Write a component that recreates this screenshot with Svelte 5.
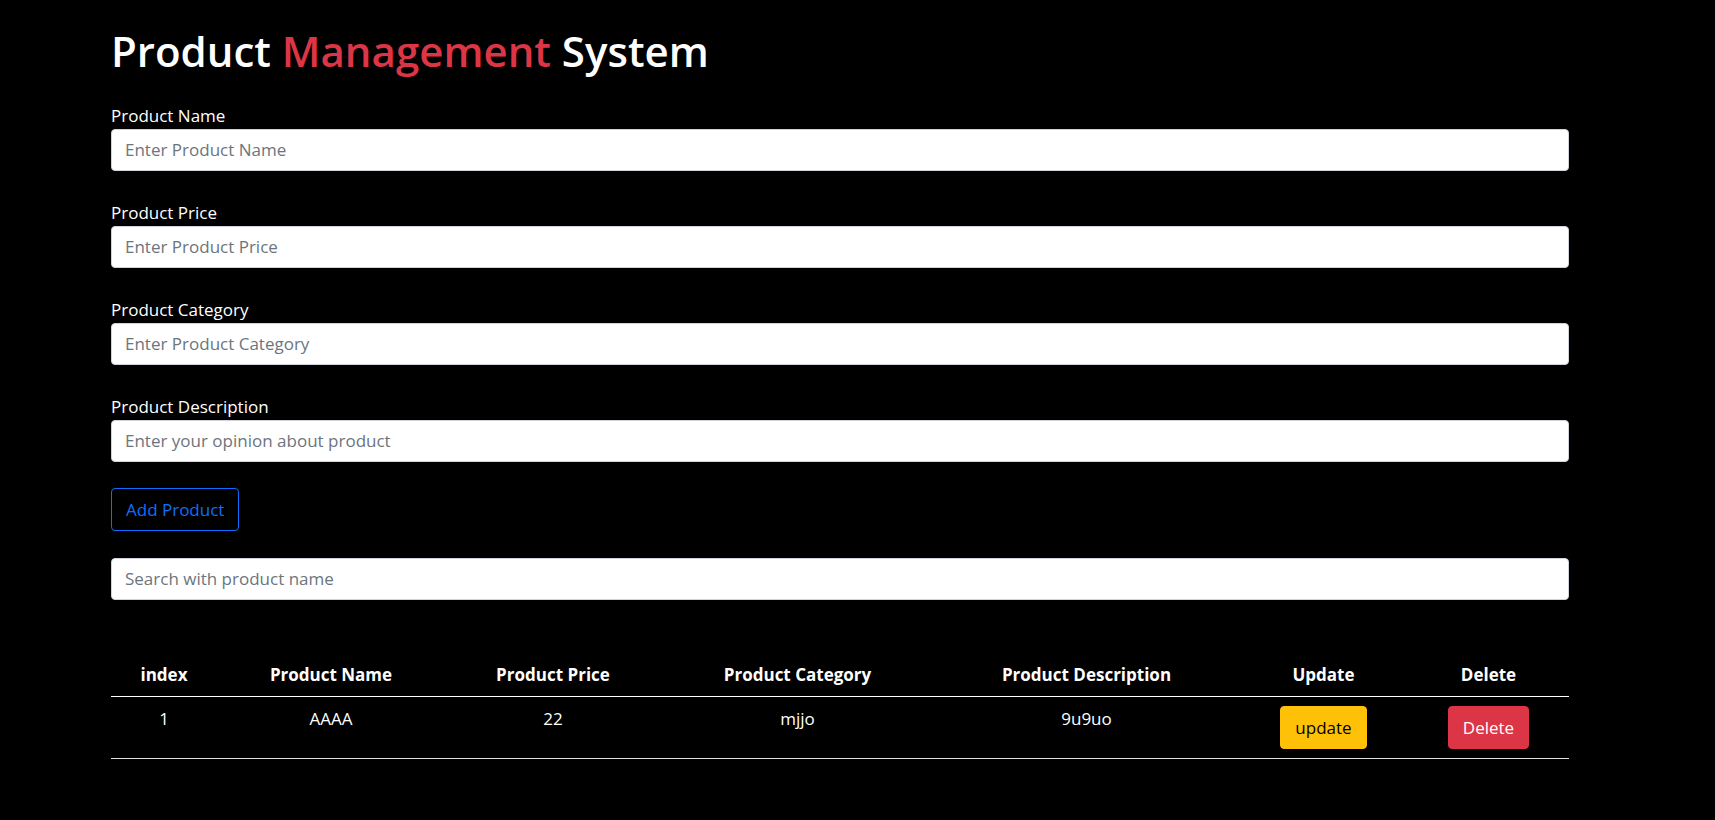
<script>
  const fields = [
    { id: 'name', label: 'Product Name', placeholder: 'Enter Product Name' },
    { id: 'price', label: 'Product Price', placeholder: 'Enter Product Price' },
    { id: 'category', label: 'Product Category', placeholder: 'Enter Product Category' },
    { id: 'description', label: 'Product Description', placeholder: 'Enter your opinion about product' },
  ];

  // Relative column widths, shared out over the table
  const columns = [
    { title: 'index', width: 106 },
    { title: 'Product Name', width: 228 },
    { title: 'Product Price', width: 216 },
    { title: 'Product Category', width: 273 },
    { title: 'Product Description', width: 305 },
    { title: 'Update', width: 169 },
    { title: 'Delete', width: 161 },
  ];
  const total = columns.reduce((sum, c) => sum + c.width, 0);

  let form = $state({ name: '', price: '', category: '', description: '' });
  let search = $state('');
  let products = $state([{ name: 'AAAA', price: '22', category: 'mjjo', description: '9u9uo' }]);
  let editing = $state(-1);

  const shown = $derived(
    products
      .map((product, index) => ({ product, index }))
      .filter(({ product }) => product.name.toLowerCase().includes(search.toLowerCase()))
  );

  function save(event) {
    event.preventDefault();
    if (editing >= 0) products[editing] = { ...form };
    else products.push({ ...form });
    editing = -1;
    form = { name: '', price: '', category: '', description: '' };
  }

  function edit(index) {
    form = { ...products[index] };
    editing = index;
  }

  function remove(index) {
    products.splice(index, 1);
    editing = -1;
  }
</script>

<main>
  <div class="container">
    <h1>Product <span>Management</span> System</h1>

    <form onsubmit={save}>
      {#each fields as field}
        <div class="field">
          <label for={field.id}>{field.label}</label>
          <input id={field.id} type="text" placeholder={field.placeholder} bind:value={form[field.id]} />
        </div>
      {/each}
      <button class="btn add" type="submit">Add Product</button>
    </form>

    <input
      class="search"
      type="text"
      aria-label="Search with product name"
      placeholder="Search with product name"
      bind:value={search}
    />

    <table>
      <colgroup>
        {#each columns as column}
          <col style:width="{(column.width / total) * 100}%" />
        {/each}
      </colgroup>
      <thead>
        <tr>
          {#each columns as column}
            <th scope="col">{column.title}</th>
          {/each}
        </tr>
      </thead>
      <tbody>
        {#each shown as { product, index }}
          <tr>
            <td>{index + 1}</td>
            <td>{product.name}</td>
            <td>{product.price}</td>
            <td>{product.category}</td>
            <td>{product.description}</td>
            <td><button class="btn update" type="button" onclick={() => edit(index)}>update</button></td>
            <td><button class="btn delete" type="button" onclick={() => remove(index)}>Delete</button></td>
          </tr>
        {/each}
      </tbody>
    </table>
  </div>
</main>

<style>
  :global(body) {
    margin: 0;
    background: #000;
  }

  main {
    box-sizing: border-box;
    min-height: 100vh;
    padding: 24px 48px 48px 13px;
    background: #000;
    color: #fff;
    font: 17px/27px 'Segoe UI', 'Open Sans', sans-serif;
  }

  .container {
    max-width: 1458px;
    margin: 0 auto;
  }

  h1 {
    margin: 0 0 24px;
    font-size: 42px;
    font-weight: 600;
    line-height: 54px;
  }

  h1 span {
    color: #dc3545;
  }

  form {
    display: flex;
    flex-direction: column;
    align-items: flex-start;
  }

  .field {
    width: 100%;
    margin-bottom: 28px;
  }

  .field:last-of-type {
    margin-bottom: 26px;
  }

  label {
    display: block;
  }

  input {
    display: block;
    box-sizing: border-box;
    width: 100%;
    height: 42px;
    padding: 0 13px 2px;
    border: 1px solid #ced4da;
    border-radius: 4px;
    background: #fff;
    color: #212529;
    font: inherit;
  }

  input::placeholder {
    color: #6c757d;
    opacity: 1;
  }

  .btn {
    padding: 7px 14px;
    border: 1px solid;
    border-radius: 4px;
    font: inherit;
    cursor: pointer;
  }

  .add {
    border-color: #0d6efd;
    background: transparent;
    color: #0d6efd;
  }

  .update {
    border-color: #ffc107;
    background: #ffc107;
    color: #000;
  }

  .delete {
    border-color: #dc3545;
    background: #dc3545;
    color: #fff;
  }

  .search {
    margin-top: 27px;
  }

  table {
    width: 100%;
    margin-top: 53px;
    border-collapse: separate;
    border-spacing: 0;
    table-layout: fixed;
    text-align: center;
  }

  th,
  td {
    padding: 8px 9px;
    border-bottom: 1px solid #dee2e6;
    vertical-align: top;
  }

  th {
    border-color: #fff;
    font-weight: 700;
  }

  td:has(.btn) {
    padding: 9px;
  }

  td .btn {
    display: block;
    margin: 0 auto;
  }
</style>
